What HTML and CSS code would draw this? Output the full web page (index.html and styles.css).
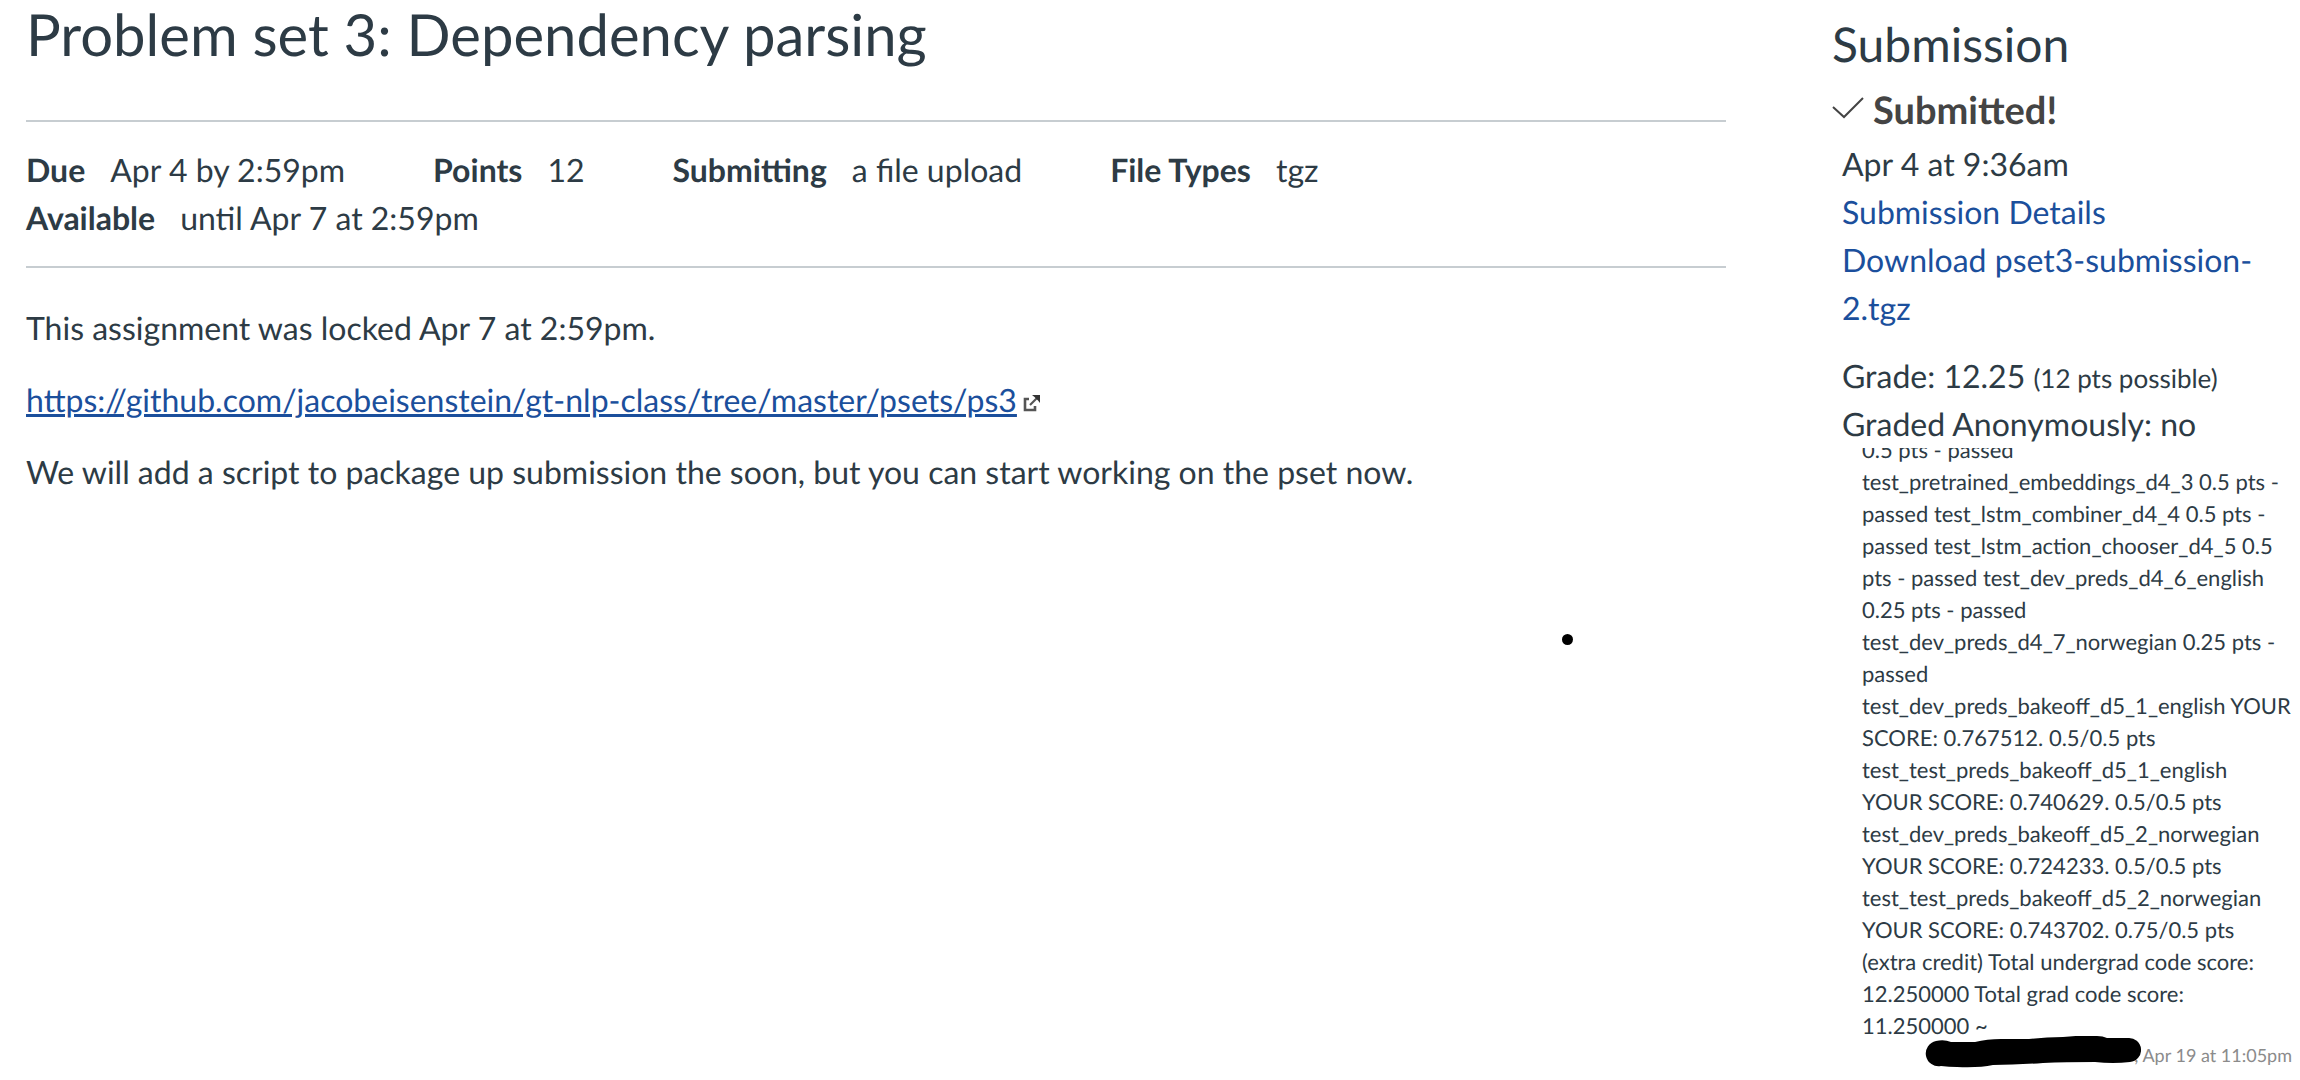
FILE: index.html
```html
<!DOCTYPE html>
<html lang="en">
<head>
<meta charset="utf-8">
<title>Problem set 3: Dependency parsing</title>
<link rel="stylesheet" href="styles.css">
</head>
<body>
<div class="layout">
  <main class="assignment">
    <h1 class="title">Problem set 3: Dependency parsing</h1>
    <dl class="details">
      <div class="detail"><dt>Due</dt><dd>Apr 4 by 2:59pm</dd></div>
      <div class="detail"><dt>Points</dt><dd>12</dd></div>
      <div class="detail"><dt>Submitting</dt><dd>a file upload</dd></div>
      <div class="detail"><dt>File Types</dt><dd>tgz</dd></div>
      <div class="detail detail-wide"><dt>Available</dt><dd>until Apr 7 at 2:59pm</dd></div>
    </dl>
    <div class="description">
      <p>This assignment was locked Apr 7 at 2:59pm.</p>
      <p><a class="external" href="https://github.com/jacobeisenstein/gt-nlp-class/tree/master/psets/ps3">https://github.com/jacobeisenstein/gt-nlp-class/tree/master/psets/ps3</a><svg class="external-icon" viewBox="0 0 18 18" aria-hidden="true"><path d="M6 5H2v11h10v-4" fill="none" stroke="#555" stroke-width="2.6"/><path d="M7 11l7-7" fill="none" stroke="#555" stroke-width="2.2"/><path d="M9 1h8v8l-2-2.500-3.500-3.500z" fill="#333"/></svg></p>
      <p>We will add a script to package up submission the soon, but you can start working on the pset now.</p>
    </div>
    <span class="dot"></span>
  </main>
  <aside class="sidebar">
    <h2 class="sidebar-title">Submission</h2>
    <div class="status"><svg class="check" viewBox="0 0 32 22" aria-hidden="true"><path d="M1 10l11 10L31 1" fill="none" stroke="#444" stroke-width="2"/></svg><span>Submitted!</span></div>
    <div class="submission">
      <div>Apr 4 at 9:36am</div>
      <a href="#details">Submission Details</a>
      <a href="#download">Download pset3-submission-2.tgz</a>
    </div>
    <div class="grade">
      <div>Grade: 12.25 <span class="possible">(12 pts possible)</span></div>
      <div>Graded Anonymously: no</div>
    </div>
    <div class="comments">
      <p class="comment">0.5 pts - passed test_pretrained_embeddings_d4_3 0.5 pts - passed test_lstm_combiner_d4_4 0.5 pts - passed test_lstm_action_chooser_d4_5 0.5 pts - passed test_dev_preds_d4_6_english 0.25 pts - passed test_dev_preds_d4_7_norwegian 0.25 pts - passed test_dev_preds_bakeoff_d5_1_english YOUR SCORE: 0.767512. 0.5/0.5 pts test_test_preds_bakeoff_d5_1_english YOUR SCORE: 0.740629. 0.5/0.5 pts test_dev_preds_bakeoff_d5_2_norwegian YOUR SCORE: 0.724233. 0.5/0.5 pts test_test_preds_bakeoff_d5_2_norwegian YOUR SCORE: 0.743702. 0.75/0.5 pts (extra credit) Total undergrad code score: 12.250000 Total grad code score: 11.250000 ~</p>
      <div class="byline"><svg class="redaction" viewBox="0 0 216 32" aria-hidden="true"><path d="M11 5Q19 3 26 6L50 6Q62 3 76 3L104 3Q120 1 138 1Q158-1 172 0Q178 0 182 2L203 2A12 12 0 0 1 205 26Q188 28 170 26Q140 26 118 27Q90 29 68 29Q54 32 32 31Q24 31 16 30A12 12 0 0 1 11 5Z" fill="#000"/></svg><span>, Apr 19 at 11:05pm</span></div>
    </div>
  </aside>
</div>
</body>
</html>
```
FILE: styles.css
```css
* { box-sizing: border-box; }
body {
  margin: 0;
  background: #fff;
  color: #2d3b45;
  font-family: Lato, "Liberation Sans", sans-serif;
  font-size: 32px;
  line-height: 48px;
  text-rendering: geometricPrecision;
}
h1, h2, p, dl, dd { margin: 0; font-weight: 400; }
a { color: #1b4f9c; text-decoration: none; }
.layout {
  display: grid;
  grid-template-columns: 1fr 460px;
  column-gap: 106px;
  padding: 0 8px 0 26px;
}
.assignment { position: relative; }
.title {
  font-size: 58px;
  line-height: 70px;
  padding-bottom: 50px;
}
.details {
  display: flex;
  flex-wrap: wrap;
  column-gap: 88px;
  padding: 24px 0;
  border-top: 2px solid #c7cdd1;
  border-bottom: 2px solid #c7cdd1;
}
.detail { display: flex; gap: 25px; }
.detail-wide { flex-basis: 100%; }
.detail dt { font-weight: 700; }
.description {
  display: flex;
  flex-direction: column;
  gap: 24px;
  padding-top: 36px;
}
.external { text-decoration: underline; }
.external-icon { width: 18px; height: 18px; margin-left: 6px; }
.dot {
  position: absolute;
  left: 1536px;
  top: 634px;
  width: 11px;
  height: 11px;
  border-radius: 50%;
  background: #000;
}
.sidebar { padding-top: 9px; }
.sidebar-title { font-size: 48px; line-height: 72px; }
.status {
  display: flex;
  gap: 9px;
  color: #444;
  font-size: 38px;
  font-weight: 700;
  line-height: 59px;
}
.check { width: 32px; height: 22px; margin-top: 16px; }
.submission {
  display: flex;
  flex-direction: column;
  align-items: flex-start;
  padding: 0 10px;
}
.grade { padding: 20px 10px 0; }
.possible { font-size: 26px; line-height: 32px; }
.comments { overflow: hidden; padding-left: 30px; }
.comment { margin-top: -14px; font-size: 22px; line-height: 32px; }
.byline {
  display: flex;
  justify-content: flex-end;
  color: #8b8b8b;
  font-size: 18px;
  line-height: 26px;
}
.redaction { width: 216px; height: 32px; margin: -6px -7px 0 0; z-index: 1; }
```
